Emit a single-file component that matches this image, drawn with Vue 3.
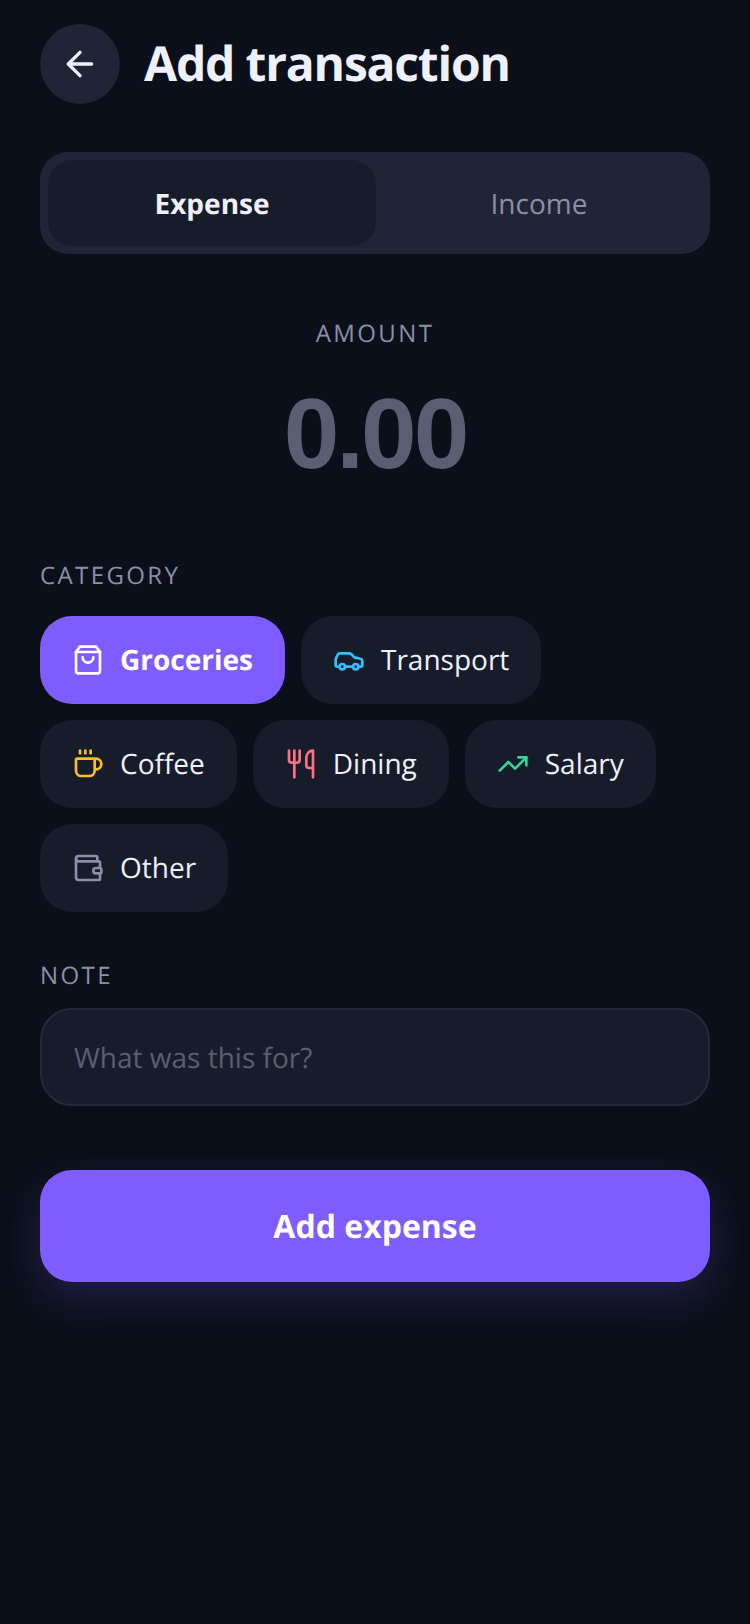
<script setup>
import { ref } from 'vue'

const mode = ref('expense')
const note = ref('')
const selected = ref('groceries')

const categories = [
  { id: 'groceries', label: 'Groceries', color: '#ffffff' },
  { id: 'transport', label: 'Transport', color: '#38bdf8' },
  { id: 'coffee', label: 'Coffee', color: '#fbbf24' },
  { id: 'dining', label: 'Dining', color: '#fb7185' },
  { id: 'salary', label: 'Salary', color: '#34d399' },
  { id: 'other', label: 'Other', color: '#8b8fa8' },
]
</script>

<template>
  <div class="page">
    <header class="top">
      <button type="button" class="back" aria-label="Back">
        <svg width="40" height="40" viewBox="0 0 24 24" fill="none" stroke="currentColor" stroke-width="2" stroke-linecap="round" stroke-linejoin="round">
          <path d="m12 19-7-7 7-7" />
          <path d="M19 12H5" />
        </svg>
      </button>
      <h1 class="title">Add transaction</h1>
    </header>

    <div class="seg">
      <button type="button" class="seg-btn" :class="{ on: mode === 'expense' }" @click="mode = 'expense'">Expense</button>
      <button type="button" class="seg-btn" :class="{ on: mode === 'income' }" @click="mode = 'income'">Income</button>
    </div>

    <section class="amount">
      <div class="amount-label">AMOUNT</div>
      <div class="amount-value">0.00</div>
    </section>

    <div class="label">CATEGORY</div>
    <div class="chips">
      <button v-for="c in categories" :key="c.id" type="button" class="chip"
              :class="{ on: selected === c.id }" @click="selected = c.id">
        <svg width="32" height="32" viewBox="0 0 24 24" fill="none" :stroke="c.color" stroke-width="2" stroke-linecap="round" stroke-linejoin="round">
          <template v-if="c.id === 'groceries'">
            <path d="M6 2 3 6v14a2 2 0 0 0 2 2h14a2 2 0 0 0 2-2V6l-3-4Z" />
            <path d="M3 6h18" />
            <path d="M16 10a4 4 0 0 1-8 0" />
          </template>
          <template v-else-if="c.id === 'transport'">
            <path d="M19 17h2c.6 0 1-.4 1-1v-3c0-.9-.7-1.7-1.500-1.900C18.700 10.600 16 10 16 10s-1.300-1.400-2.200-2.300c-.5-.4-1.100-.7-1.800-.7H5c-.6 0-1.100.4-1.400.9l-1.400 2.900A3.700 3.700 0 0 0 2 12v4c0 .6.4 1 1 1h2" />
            <circle cx="7" cy="17" r="2" />
            <path d="M9 17h6" />
            <circle cx="17" cy="17" r="2" />
          </template>
          <template v-else-if="c.id === 'coffee'">
            <path d="M10 2v2" />
            <path d="M14 2v2" />
            <path d="M6 2v2" />
            <path d="M16 8a1 1 0 0 1 1 1v8a4 4 0 0 1-4 4H7a4 4 0 0 1-4-4V9a1 1 0 0 1 1-1h14a4 4 0 1 1 0 8h-1" />
          </template>
          <template v-else-if="c.id === 'dining'">
            <path d="M3 2v7c0 1.100.9 2 2 2h4a2 2 0 0 0 2-2V2" />
            <path d="M7 2v20" />
            <path d="M21 15V2a5 5 0 0 0-5 5v6c0 1.100.9 2 2 2h3Zm0 0v7" />
          </template>
          <template v-else-if="c.id === 'salary'">
            <path d="M22 7l-8.500 8.500-5-5L2 17" />
            <path d="M16 7h6v6" />
          </template>
          <template v-else>
            <path d="M19 7V4a1 1 0 0 0-1-1H5a2 2 0 0 0 0 4h15a1 1 0 0 1 1 1v4h-3a2 2 0 0 0 0 4h3a1 1 0 0 0 1-1v-2a1 1 0 0 0-1-1" />
            <path d="M3 5v14a2 2 0 0 0 2 2h15a1 1 0 0 0 1-1v-4" />
          </template>
        </svg>
        <span>{{ c.label }}</span>
      </button>
    </div>

    <div class="label note-label">NOTE</div>
    <input v-model="note" class="note" type="text" placeholder="What was this for?" />

    <button type="button" class="submit">Add expense</button>
  </div>
</template>

<style>
html, body { background: #0b0f19; }
</style>

<style scoped>
.page { box-sizing: border-box; width: 750px; min-height: 1624px; padding: 24px 40px 0; background: #0b0f19; color: #eef0fb; font-family: "Open Sans", sans-serif; text-rendering: geometricPrecision; }
button, input { text-rendering: geometricPrecision; }
button { font-family: inherit; border: 0; cursor: pointer; }
.top { display: flex; align-items: center; gap: 24px; }
.back { display: flex; align-items: center; justify-content: center; width: 80px; height: 80px; padding: 0; border-radius: 50%; background: #1f2437; color: #eef0fb; }
.title { margin: 0; font-size: 48px; line-height: 76px; font-weight: 700; letter-spacing: -1.2px; color: #eef0fb; }
.seg { display: grid; grid-template-columns: 328px 1fr; margin-top: 48px; padding: 8px; height: 102px; box-sizing: border-box; border-radius: 28px; background: #1f2437; }
.seg-btn { padding: 2px 0 0; background: transparent; border-radius: 24px; font-size: 28px; color: #8b8fa8; }
.seg-btn.on { background: #171c2b; color: #eef0fb; font-weight: 700; }
.amount { margin-top: 62px; text-align: center; }
.amount-label { font-size: 24px; line-height: 36px; letter-spacing: 2.4px; color: #8b8fa8; }
.amount-value { margin-top: 30px; font-family: "Liberation Sans", sans-serif; font-size: 100px; line-height: 104px; font-weight: 700; letter-spacing: -3px; color: #5a5e72; }
.label { font-size: 24px; line-height: 36px; letter-spacing: 2.4px; color: #8b8fa8; }
.amount + .label { margin-top: 72px; }
.chips { display: flex; flex-wrap: wrap; gap: 16px; margin-top: 22px; }
.chip { display: flex; align-items: center; gap: 16px; height: 88px; padding: 0 32px; border-radius: 32px; background: #171c2b; color: #eef0fb; font-size: 28px; }
.chip.on { background: #7f5cff; color: #fff; font-weight: 700; }
.note-label { margin-top: 46px; }
.note { display: block; box-sizing: border-box; width: 100%; height: 98px; margin-top: 14px; padding: 2px 32px 0; border: 2px solid #23283b; border-radius: 32px; background: #171c2b; color: #eef0fb; font-family: inherit; font-size: 28px; outline: none; }
.note::placeholder { color: #5a5e72; opacity: 1; }
.submit { display: block; width: 100%; height: 112px; margin-top: 64px; border-radius: 32px; background: #7f5cff; color: #fff; font-size: 32px; font-weight: 700; box-shadow: 0 16px 40px rgba(127, 92, 255, 0.2); }
</style>
